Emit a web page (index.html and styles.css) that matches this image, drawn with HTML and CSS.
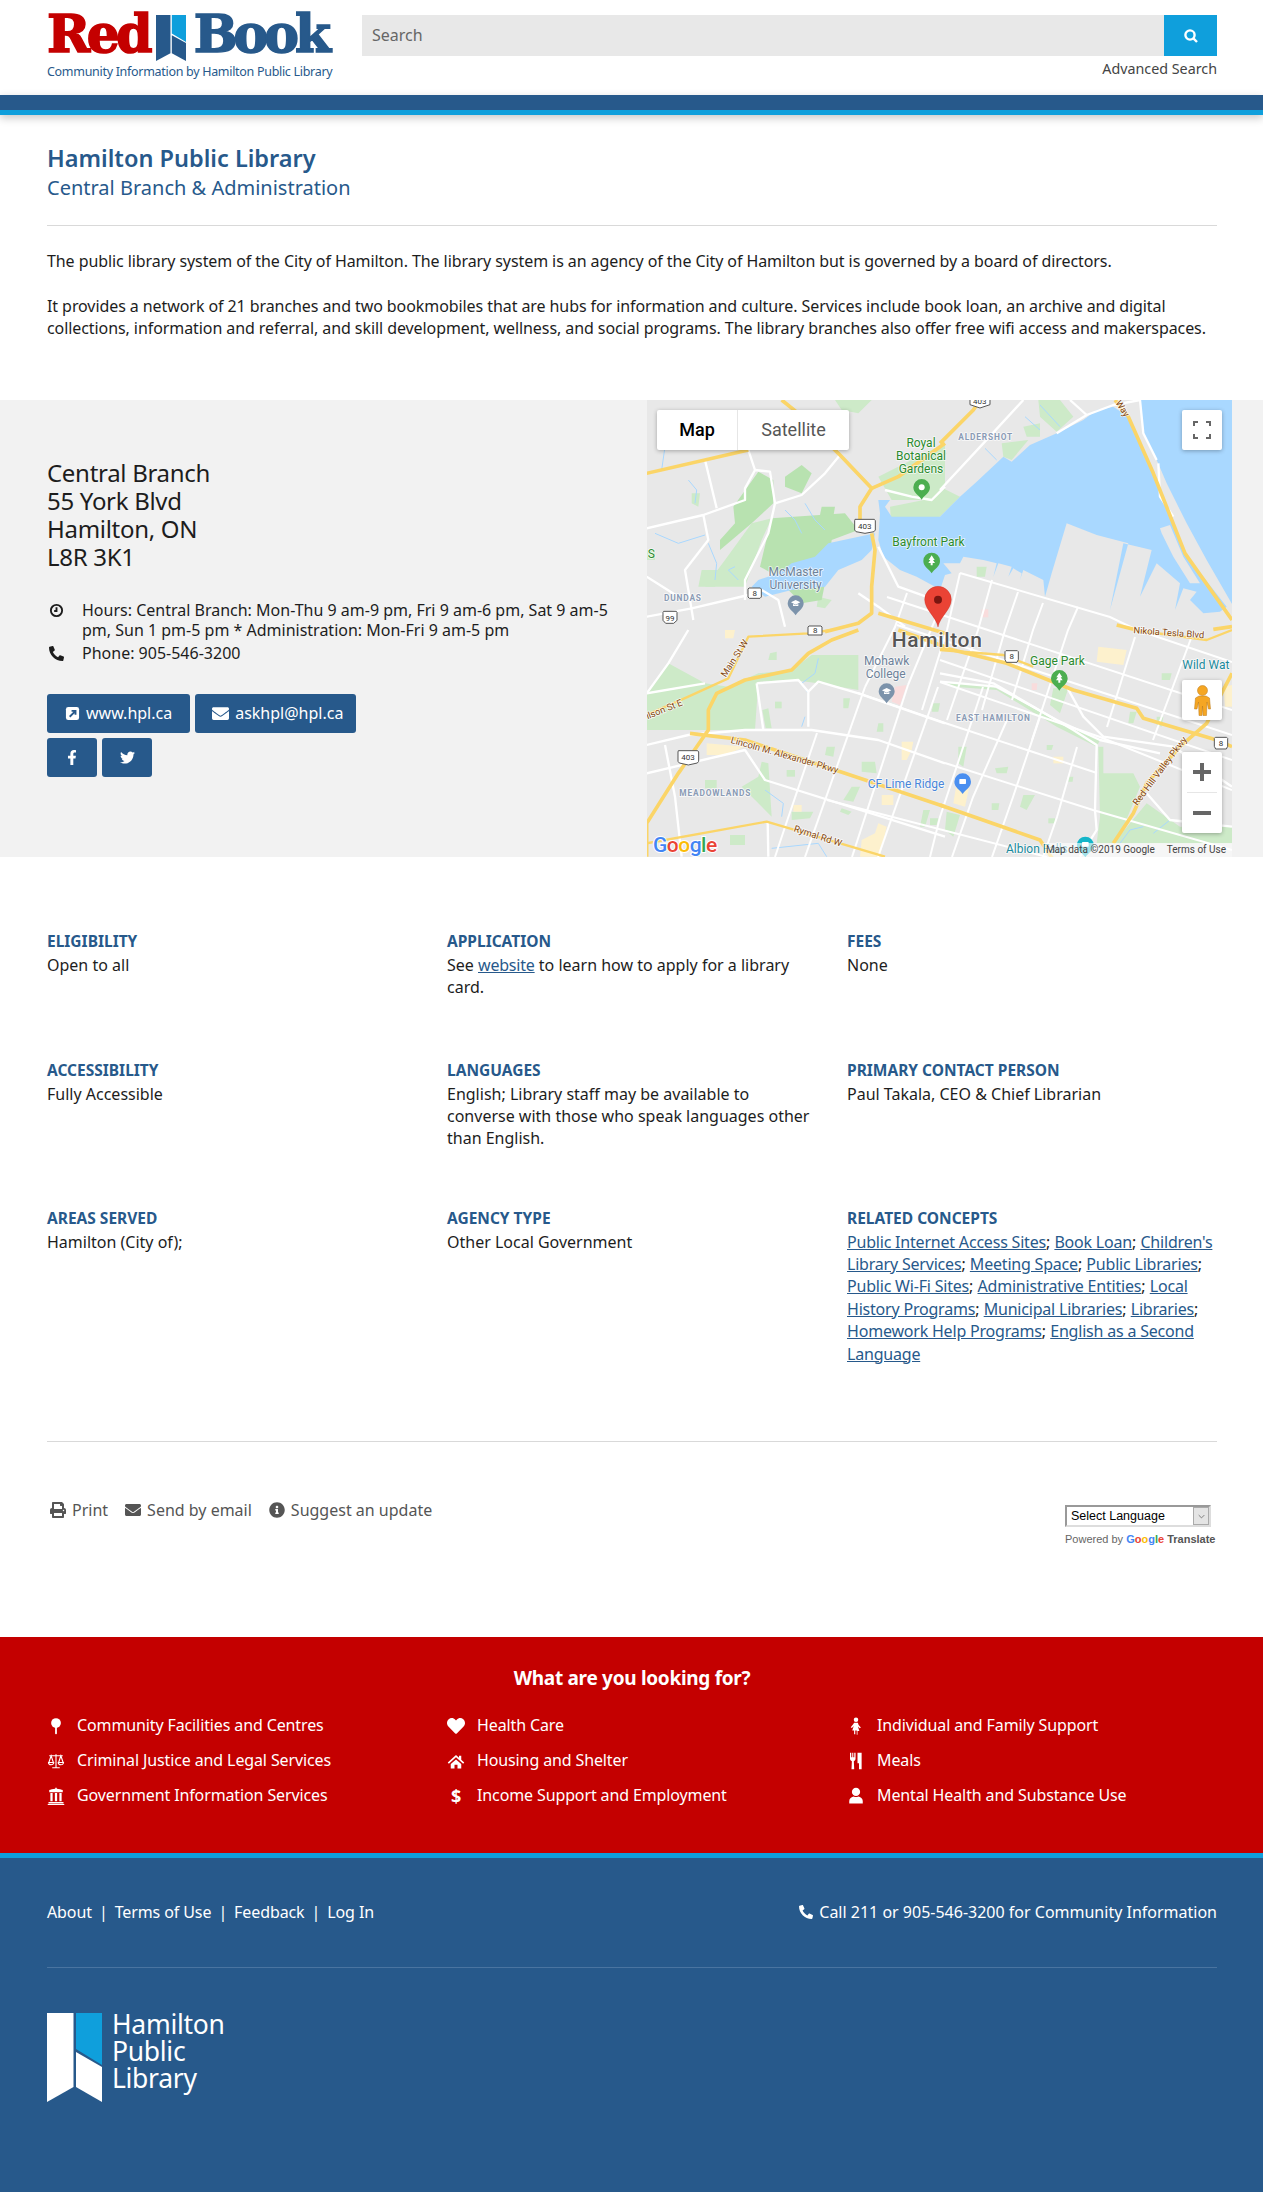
FILE: index.html
```html
<!DOCTYPE html>
<html lang="en">
<head>
<meta charset="utf-8">
<title>Hamilton Public Library - Red Book</title>
<link rel="stylesheet" href="styles.css">
</head>
<body>
<header class="site-header">
  <div class="brand">
    <div class="brand-mark">
      <span class="brand-red">Red</span>
      <svg class="brand-ribbon" viewBox="0 0 55 89" preserveAspectRatio="none"><polygon class="fill-blue" points="0,0 26.5,0 26.5,74 0,89"/><polygon class="fill-cyan" points="29,0 55,0 55,52 29,36"/><polygon class="fill-blue" points="29,39 55,54 55,89 29,74"/></svg>
      <span class="brand-book">Book</span>
    </div>
    <div class="brand-tag">Community Information by Hamilton Public Library</div>
  </div>
  <div class="search-col">
    <div class="search-bar">
      <div class="search-input">Search</div>
      <div class="search-btn"><svg class="ico-search" viewBox="0 0 16 16"><circle cx="7" cy="7" r="4.6"/><line x1="10.4" y1="10.4" x2="14" y2="14"/></svg></div>
    </div>
    <div class="adv-search">Advanced Search</div>
  </div>
</header>
<div class="band"></div>

<section class="intro">
  <h1>Hamilton Public Library</h1>
  <h2>Central Branch &amp; Administration</h2>
  <hr class="rule">
  <p>The public library system of the City of Hamilton. The library system is an agency of the City of Hamilton but is governed by a board of directors.</p>
  <p>It provides a network of 21 branches and two bookmobiles that are hubs for information and culture. Services include book loan, an archive and digital collections, information and referral, and skill development, wellness, and social programs. The library branches also offer free wifi access and makerspaces.</p>
</section>

<section class="location">
  <div class="loc-info">
    <address>Central Branch<br>55 York Blvd<br>Hamilton, ON<br>L8R 3K1</address>
    <div class="loc-line first">
      <svg class="loc-ico" viewBox="0 0 16 16"><circle class="clock" cx="8" cy="8" r="6"/><path class="clock" d="M8 4.500V8.500H5.500"/></svg>
      <span>Hours: Central Branch: Mon-Thu 9 am-9 pm, Fri 9 am-6 pm, Sat 9 am-5 pm, Sun 1 pm-5 pm * Administration: Mon-Fri 9 am-5 pm</span>
    </div>
    <div class="loc-line">
      <svg class="loc-ico" viewBox="0 0 512 512"><path transform="translate(512,0) scale(-1,1)" d="M493.4 24.6l-104-24c-11.3-2.6-22.9 3.3-27.5 13.9l-48 112c-4.2 9.8-1.4 21.3 6.9 28l60.6 49.6c-36 76.7-98.9 140.5-177.2 177.2l-49.6-60.6c-6.8-8.3-18.2-11.1-28-6.9l-112 48C3.9 366.5-2 378.1.6 389.4l24 104C27.1 504.2 36.7 512 48 512c256.1 0 464-207.5 464-464 0-11.2-7.7-20.9-18.6-23.4z"/></svg>
      <span>Phone: 905-546-3200</span>
    </div>
    <div class="btn-row first">
      <a class="btn web"><svg class="btn-ico" viewBox="0 0 16 16"><rect class="w" x="1" y="1" width="14" height="14" rx="2.5"/><path class="arrow" d="M5 11.5L10.500 6M7 5.2H11.2V9.4"/></svg>www.hpl.ca</a>
      <a class="btn mail"><svg class="btn-ico wide" viewBox="0 0 512 512"><path class="w" d="M502.3 190.8c3.9-3.1 9.7-.2 9.7 4.7V400c0 26.5-21.5 48-48 48H48c-26.5 0-48-21.5-48-48V195.6c0-5 5.7-7.8 9.7-4.7 22.4 17.4 52.1 39.5 154.1 113.6 21.1 15.4 56.7 47.8 92.2 47.6 35.7.3 72-32.8 92.3-47.6 102-74.1 131.6-96.3 154-113.7zM256 320c23.2.4 56.6-29.2 73.4-41.4 132.7-96.3 142.8-104.7 173.4-128.7 5.8-4.5 9.2-11.5 9.2-18.9v-19c0-26.5-21.5-48-48-48H48C21.5 64 0 85.5 0 112v19c0 7.4 3.4 14.3 9.2 18.9 30.6 23.9 40.7 32.4 173.4 128.7 16.8 12.2 50.2 41.8 73.4 41.4z"/></svg>askhpl@hpl.ca</a>
    </div>
    <div class="btn-row">
      <a class="btn icon"><svg class="soc-f" viewBox="0 0 320 512"><path class="w" d="M279.14 288l14.22-92.66h-88.91v-60.13c0-25.35 12.42-50.06 52.24-50.06h40.42V6.26S260.43 0 225.36 0c-73.22 0-121.08 44.38-121.08 124.72v70.62H22.89V288h81.39v224h100.17V288z"/></svg></a>
      <a class="btn icon"><svg class="soc-t" viewBox="0 0 512 512"><path class="w" d="M459.37 151.716c.325 4.548.325 9.097.325 13.645 0 138.72-105.583 298.558-298.558 298.558-59.452 0-114.68-17.219-161.137-47.106 8.447.974 16.568 1.299 25.34 1.299 49.055 0 94.213-16.568 130.274-44.832-46.132-.975-84.792-31.188-98.112-72.772 6.498.974 12.995 1.624 19.818 1.624 9.421 0 18.843-1.3 27.614-3.573-48.081-9.747-84.143-51.98-84.143-102.985v-1.299c13.969 7.797 30.214 12.67 47.431 13.319-28.264-18.843-46.781-51.005-46.781-87.391 0-19.492 5.197-37.36 14.294-52.954 51.655 63.675 129.3 105.258 216.365 109.807-1.624-7.797-2.599-15.918-2.599-24.04 0-57.828 46.782-104.934 104.934-104.934 30.213 0 57.502 12.67 76.67 33.137 23.715-4.548 46.456-13.32 66.599-25.34-7.798 24.366-24.366 44.833-46.132 57.827 21.117-2.273 41.584-8.122 60.426-16.243-14.292 20.791-32.161 39.308-52.628 54.253z"/></svg></a>
    </div>
  </div>

  <div class="map">
    <svg class="map-svg" viewBox="0 0 585 457">
      <g class="lt">
        <g transform="translate(-2,0) scale(.33333)">
          <polygon points="700,230 900,130 900,300 740,300"/><polygon points="735,320 885,290 885,350 740,390"/><polygon points="570,0 680,0 640,40 590,30"/><polygon points="320,370 380,355 350,420 300,560 180,560 240,480"/><polygon points="0,450 30,450 30,480 0,480"/><polygon points="170,510 220,510 210,560 160,560"/><polygon points="140,280 165,280 160,320 140,310"/><polygon points="520,590 560,600 540,625 515,620"/>
        </g>
        <g transform="translate(293,0) scale(.33333)">
          <polygon points="295,0 360,0 400,50 350,95 300,50"/><polygon points="250,80 300,70 300,110 260,110"/><polygon points="185,130 265,120 215,180 190,170"/><polygon points="0,260 60,290 0,350"/><polygon points="0,140 20,160 0,190"/><polygon points="110,500 140,500 135,530 110,530"/>
          <polygon points="580,180 610,170 625,210 595,225"/>
        </g>
        <g transform="translate(-2,230) scale(.33333)">
          <polygon points="5,190 70,100 180,160 250,170 340,130 440,120 500,75 640,75 640,180 520,160 440,150 340,155 330,300 190,300 100,300 5,300"/><polygon points="350,395 370,400 380,560 340,520 290,470 340,440"/><polygon points="375,70 395,65 395,90 370,90"/><polygon points="390,215 410,215 410,235 390,235"/><polygon points="352,240 370,235 380,295 362,295"/><polygon points="700,280 715,280 715,305 695,305"/><polygon points="545,350 570,350 565,380 540,375"/><polygon points="425,420 450,420 450,440 425,440"/><polygon points="650,395 690,395 695,430 650,425"/><polygon points="620,470 645,470 625,515 595,510"/><polygon points="440,545 505,545 495,565 440,570"/><polygon points="865,220 885,220 880,245 860,245"/><polygon points="595,205 615,205 610,235 595,235"/><polygon points="255,615 300,615 300,645 255,645"/><polygon points="590,535 620,545 610,555 585,545"/><polygon points="835,540 855,540 840,590 825,590"/><polygon points="855,565 880,565 875,585 855,585"/><polygon points="180,450 215,450 215,475 180,475"/>
        </g>
        <g transform="translate(293,230) scale(.33333)">
          <polygon points="15,155 150,165 350,270 480,330 470,350 350,290 170,180 40,170"/><polygon points="340,175 385,175 360,250 330,225"/><polygon points="475,350 490,350 490,430 580,430 600,470 530,640 470,640 480,560"/><polygon points="165,415 205,410 200,430 170,430"/><polygon points="320,345 340,345 335,360 320,360"/><polygon points="385,440 400,440 398,455 385,455"/><polygon points="250,495 285,495 260,540 240,530"/><polygon points="155,520 178,520 175,540 155,540"/><polygon points="325,565 345,565 345,580 325,580"/><polygon points="55,350 80,350 70,410 55,400"/><polygon points="20,545 60,555 40,620 15,600"/><polygon points="570,245 590,245 580,280 565,280"/><polygon points="665,130 695,130 690,150 665,150"/><polygon points="650,260 670,260 665,290 650,285"/><polygon points="620,520 720,590 876,590 876,640 520,640"/>
        </g>
      </g>
      <g class="dk" transform="translate(-2,0) scale(.33333)">
        <polygon points="265,320 340,215 385,240 385,310 320,370 225,450 225,420 270,370"/><polygon points="380,355 600,340 640,390 560,420 550,500 530,600 470,610 380,520 345,500"/><polygon points="420,230 470,195 500,220 470,280 420,260"/><polygon points="530,320 570,320 565,350 525,345"/>
      </g>
      <g class="stream">
        <g transform="translate(-2,0) scale(.33333)">
          <polyline points="130,240 155,270 150,310"/><polyline points="420,330 450,360 470,400"/><polyline points="480,310 510,360 540,390"/><polyline points="120,90 60,140 50,210"/><polyline points="270,500 250,510 280,540"/><polyline points="190,430 215,490 210,540"/><polyline points="30,400 100,430 180,405"/>
        </g>
        <g transform="translate(293,0) scale(.33333)">
          <polyline points="255,50 300,90"/><polyline points="135,145 170,180"/><polyline points="300,15 360,80"/>
        </g>
        <g transform="translate(-2,230) scale(.33333)">
          <polyline points="520,85 510,130 470,160 490,190"/><polyline points="480,260 470,290"/><polyline points="360,480 415,520 410,560"/><polyline points="380,655 520,640 545,680"/>
        </g>
        <g transform="translate(293,230) scale(.33333)">
          <polyline points="610,590 570,600 540,640"/><polyline points="690,570 640,610"/>
        </g>
      </g>
      <g class="tan">
        <polygon transform="translate(-2,230) scale(.33333)" points="770,335 805,335 800,360 785,390 770,390"/><polygon transform="translate(-2,230) scale(.33333)" points="710,495 745,495 745,525 710,525"/><polygon transform="translate(-2,230) scale(.33333)" points="650,630 690,610 700,580 725,590 705,680 645,680"/><polygon transform="translate(-2,230) scale(.33333)" points="185,340 300,350 240,375 185,375"/><polygon transform="translate(-2,230) scale(.33333)" points="445,525 470,525 470,545 445,545"/><polygon transform="translate(-2,230) scale(.33333)" points="240,0 270,0 265,25 240,25"/>
        <polygon transform="translate(293,230) scale(.33333)" points="475,50 560,60 550,105 470,95"/><polygon transform="translate(293,230) scale(.33333)" points="340,380 370,380 370,400 340,400"/><polygon transform="translate(293,230) scale(.33333)" points="50,460 90,460 75,530 40,520"/><polygon transform="translate(293,230) scale(.33333)" points="850,170 876,165 876,230 855,230"/>
      </g>
      <g class="pink">
        <polygon transform="translate(-2,230) scale(.33333)" points="750,170 785,165 765,225 740,215"/><polygon transform="translate(293,230) scale(.33333)" points="275,160 292,160 290,180 275,180"/><polygon transform="translate(293,0) scale(.33333)" points="125,628 145,628 145,652 125,652"/>
      </g>
      <g class="water" transform="translate(293,0) scale(.33333)">
        <polygon points="600,0 876,0 876,612 800,480 740,370 680,250 650,180 610,100"/>
        <polygon points="520,20 470,30 430,60 350,100 270,135 215,185 190,170 110,245 60,290 0,350 -145,350 -165,320 -150,300 -185,300 -180,340 -185,420 -170,470 -120,510 -70,530 -15,560 0,570 15,525 35,520 10,490 60,490 70,470 130,480 170,490 160,530 175,490 215,500 205,530 220,505 245,520 240,540 250,510 310,540 315,590 335,520 380,370 470,405 565,430 510,630 550,430 635,450 600,590 650,490 720,550 705,630 730,565 770,575 750,600 790,640 840,635 860,620 735,460 640,220 565,50"/>
        <polygon points="-195,400 -335,430 -375,470 -445,490 -485,520 -545,540 -565,560 -525,590 -445,570 -345,560 -305,510 -235,480 -205,450"/>
      </g>
      <g class="land" transform="translate(293,0) scale(.33333)">
        <polygon points="660,385 690,375 730,470 780,550 750,550 700,470 665,400"/>
      </g>
      <g class="rd" transform="translate(-2,0) scale(.33333)">
        <polyline points="5,385 175,345 300,300 300,265 330,210 375,215 390,310 470,285 540,220 585,165 560,120"/><polyline points="390,310 370,400 300,540 300,600"/><polyline points="175,345 190,420 120,510 135,600 145,660"/><polyline points="180,180 215,325"/><polyline points="310,150 330,210"/><polyline points="5,530 60,565 100,590"/><polyline points="5,650 140,625 310,585 350,570 400,600 420,680"/><polyline points="700,440 760,560 900,610"/><polyline points="720,270 800,290 860,300 900,260"/><polyline points="640,580 700,620 780,680"/>
      </g>
      <g class="rd" transform="translate(293,0) scale(.33333)">
        <polyline points="0,270 130,130 250,0"/><polyline points="390,0 440,45 520,15 600,0"/><polyline points="350,100 440,45"/><polyline points="600,0 610,100 650,180"/><polyline points="655,190 660,290 700,350"/>
      </g>
      <g class="rd" transform="translate(-2,230) scale(.33333)">
        <polyline points="5,345 130,315 300,300 500,300 700,330 900,400"/><polyline points="5,430 300,360 360,450 900,620"/><polyline points="335,160 355,300"/><polyline points="335,160 460,150 490,185 490,290"/><polyline points="490,185 520,155 640,190 900,280"/><polyline points="60,345 90,500 110,680"/><polyline points="5,190 70,100 130,0"/>
        <polyline points="5,190 180,160"/><polyline points="368,575 370,680"/>
      </g>
      <g class="rd" transform="translate(293,230) scale(.33333)">
        <polyline points="0,155 170,170 350,270 480,330 660,370"/><polyline points="0,130 160,160 400,300 470,345 465,540 470,600 420,680"/><polyline points="380,170 430,260 490,320 700,350"/><polyline points="620,490 690,570 876,590"/><polyline points="700,350 876,470"/>
      </g>
      <g class="rd2">
        <polyline points="218,287 158,457"/><polyline points="261,285 205,457"/><polyline points="291,287 231,457"/><polyline points="336,287 293,417 283,457"/><polyline points="360,320 326,397 305,457"/><polyline points="393,317 366,397 345,457"/><polyline points="430,347 410,417 396,457"/><polyline points="313,173 300,230 275,310"/><polyline points="345,180 331,230 300,320"/><polyline points="371,192 358,230 335,310"/><polyline points="396,203 386,230 365,300"/><polyline points="431,207 421,230 385,340"/><polyline points="488,237 460,327"/><polyline points="546,233 506,340"/><polyline points="260,193 248,227 218,287"/><polyline points="298,197 285,227 261,285"/><polyline points="170,333 138,427 128,457"/>
        <polyline points="313,173 463,217 490,230 585,262"/><polyline points="240,197 585,310"/><polyline points="250,225 585,335"/><polyline points="211,293 298,323 450,373"/><polyline points="298,363 446,410 585,450"/><polyline points="293,282 453,337 585,390"/><polyline points="293,260 585,360"/><polyline points="180,400 400,457"/>
      </g>
      <g class="hw">
        <g transform="translate(-2,0) scale(.33333)">
          <polyline points="5,220 310,150"/><polyline points="410,0 460,40 580,160 680,265 645,320 645,370"/><polyline points="680,265 760,230 900,130"/><polyline points="680,400 690,450 680,560 680,640 640,670 540,695"/><polyline points="700,640 900,700"/>
        </g>
        <g transform="translate(293,0) scale(.33333)">
          <polyline points="0,130 100,30 120,0"/><polyline points="525,0 565,50 640,220 735,460 876,660"/><polyline points="530,675 590,690"/><polyline points="820,688 876,680"/>
        </g>
        <g transform="translate(-2,230) scale(.33333)">
          <polyline points="640,0 560,30 490,70 440,120 300,150 215,190 190,240 190,300 100,430 5,580 5,680"/><polyline class="thin" points="5,255 130,200 250,145 310,20 490,10 560,0"/><polyline points="135,310 300,330 600,430 900,530"/><polyline class="thin" points="5,640 365,575 720,680"/>
          <polyline points="760,0 900,50"/>
        </g>
        <g transform="translate(293,230) scale(.33333)">
          <polyline points="0,50 200,100 400,180 590,235 610,265 830,330 876,350"/><polyline class="thin" points="0,60 190,75 280,110"/><polyline points="0,525 300,630 340,690"/><polyline points="520,640 580,550 620,460 720,350 800,280 850,180 876,130"/><polyline class="thin" points="580,0 800,30 876,0"/>
        </g>
      </g>
      <g class="pins">
        <g transform="translate(-2,0) scale(.33333)">
          <path class="pin-green" d="M830 237a25 25 0 0 1 25 25c0 17-17 24-25 37c-8-13-25-20-25-37a25 25 0 0 1 25-25z"/><circle class="pin-in" cx="830" cy="262" r="9"/>
          <path class="pin-green" d="M860 458a25 25 0 0 1 25 25c0 17-17 24-25 37c-8-13-25-20-25-37a25 25 0 0 1 25-25z"/><path class="pin-in" d="M860 466l9 14h-5l6 9h-7v7h-6v-7h-7l6-9h-5z"/>
          <path class="pin-gray" d="M452 586a24 24 0 0 1 24 24c0 16-16 23-24 36c-8-13-24-20-24-36a24 24 0 0 1 24-24z"/><path class="pin-in" d="M452 600l14 7-14 7-14-7zM444 612l8 4 8-4v6h-16z"/>
        </g>
        <g transform="translate(-2,230) scale(.33333)">
          <path class="pin-gray" d="M725 160a24 24 0 0 1 24 24c0 16-16 23-24 36c-8-13-24-20-24-36a24 24 0 0 1 24-24z"/><path class="pin-in" d="M725 174l14 7-14 7-14-7zM717 186l8 4 8-4v6h-16z"/>
        </g>
        <g transform="translate(293,230) scale(.33333)">
          <path class="pin-green" d="M358 120a25 25 0 0 1 25 25c0 17-17 24-25 37c-8-13-25-20-25-37a25 25 0 0 1 25-25z"/><path class="pin-in" d="M358 128l9 14h-5l6 9h-7v7h-6v-7h-7l6-9h-5z"/>
          <path class="pin-blue" d="M68 430a25 25 0 0 1 25 25c0 17-17 24-25 37c-8-13-25-20-25-37a25 25 0 0 1 25-25z"/><rect class="pin-in" x="58" y="447" width="20" height="15" rx="2"/>
          <path class="pin-teal" d="M436 620a25 25 0 0 1 25 25c0 17-17 24-25 37c-8-13-25-20-25-37a25 25 0 0 1 25-25z"/><rect class="pin-in" x="426" y="636" width="20" height="14" rx="2"/>
        </g>
      </g>
      <g class="shield">
        <g transform="translate(-2,0) scale(.33333)">
          <path d="M630 358h58l3 4v28l-4 5-27 5-27-5-4-5v-28z"/><text x="659" y="386">403</text>
          <path d="M312 564h34l3 3v24l-4 4h-32l-4-4v-24z"/><text x="329" y="588">8</text>
          <path d="M56 634h38l2 3v24l-10 9h-24l-8-9v-24z"/><text x="75" y="662">99</text>
          <path d="M492 678h36l3 3v24h-42v-24z"/><text x="511" y="699">8</text>
        </g>
        <g transform="translate(293,0) scale(.33333)">
          <path d="M88 -20h60l2 4v30l-30 10-30-10v-30z"/><text x="119" y="12">403</text>
        </g>
        <g transform="translate(-2,230) scale(.33333)">
          <path d="M100 362h58l3 4v28l-4 5-27 6-27-6-4-5v-28z"/><text x="129" y="391">403</text>
        </g>
        <g transform="translate(293,230) scale(.33333)">
          <path d="M198 62h34l3 3v24l-4 8h-32l-4-8v-24z"/><text x="215" y="87">8</text>
          <path d="M826 322h34l3 3v24l-4 8h-32l-4-8v-24z"/><text x="843" y="349">8</text>
        </g>
      </g>
      <g class="lab">
        <g transform="translate(-2,0) scale(.33333)">
          <text class="gr" x="828" y="142" text-anchor="middle">Royal</text>
          <text class="gr" x="828" y="181" text-anchor="middle">Botanical</text>
          <text class="gr" x="828" y="220" text-anchor="middle">Gardens</text>
          <text class="gr" x="742" y="439">Bayfront Park</text>
          <text class="gr" x="8" y="473">S</text>
          <text class="sl" x="452" y="529" text-anchor="middle">McMaster</text>
          <text class="sl" x="452" y="568" text-anchor="middle">University</text>
          <text class="dist" x="57" y="602">DUNDAS</text>
        </g>
        <g transform="translate(293,0) scale(.33333)">
          <text class="dist" x="55" y="119">ALDERSHOT</text>
          <text class="rdl" transform="translate(526,8) rotate(58)">Way</text>
        </g>
        <g transform="translate(-2,230) scale(.33333)">
          <text class="city" x="740" y="52">Hamilton</text>
          <text class="sl" x="725" y="106" text-anchor="middle">Mohawk</text>
          <text class="sl" x="722" y="145" text-anchor="middle">College</text>
          <text class="dist" x="103" y="497">MEADOWLANDS</text>
          <text class="bl" x="668" y="475">CF Lime Ridge</text>
          <text class="rdl" transform="translate(256,338) rotate(16)">Lincoln M. Alexander Pkwy</text>
          <text class="rdl" transform="translate(242,143) rotate(-57)">Main St W</text>
          <text class="rdl" transform="translate(8,268) rotate(-22)">ilson St E</text>
          <text class="rdl" transform="translate(445,604) rotate(18)">Rymal Rd W</text>
        </g>
        <g transform="translate(293,230) scale(.33333)">
          <text class="gr" x="270" y="104">Gage Park</text>
          <text class="dist" x="48" y="272">EAST HAMILTON</text>
          <text class="tl" x="727" y="118">Wild Wat</text>
          <text class="tl" x="198" y="668">Albion Falls</text>
          <text class="rdl" transform="translate(580,10) rotate(4)">Nikola Tesla Blvd</text>
          <text class="rdl" transform="translate(592,528) rotate(-53)">Red Hill Valley Pkwy</text>
        </g>
      </g>
      <g transform="translate(291,227) scale(.33333)">
        <path class="marker" d="M0 0c-6-32-40-52-40-82a40 40 0 0 1 80 0c0 30-34 50-40 82z"/>
        <circle class="marker-dot" cx="0" cy="-82" r="12"/>
      </g>
      <text class="google" x="6" y="452"><tspan class="g-b">G</tspan><tspan class="g-r">o</tspan><tspan class="g-y">o</tspan><tspan class="g-b">g</tspan><tspan class="g-g">l</tspan><tspan class="g-r">e</tspan></text>
    </svg>
    <div class="map-type"><span class="on">Map</span><span>Satellite</span></div>
    <div class="map-btn full"><svg viewBox="0 0 18 18" class="full-ico"><path d="M1 5V1H5M13 1H17V5M17 13V17H13M5 17H1V13"/></svg></div>
    <div class="map-btn peg"><svg viewBox="0 0 17 31" class="peg-ico"><circle cx="8.500" cy="5.500" r="5"/><path d="M5 11h7l3.500 2 1 11h-2l-1.500-7-.5 13.500H9L8.500 21 8 30.500H5L4.500 17 3 24H.5l1-11z"/></svg></div>
    <div class="map-btn zoom"><svg viewBox="0 0 18 18" class="zoom-ico"><path d="M7 0h4v7h7v4h-7v7H7v-7H0V7h7z"/></svg><i class="zoom-sep"></i><svg viewBox="0 0 18 18" class="zoom-ico"><rect x="0" y="7" width="18" height="4"/></svg></div>
    <div class="map-attr"><span>Map data ©2019 Google</span><span>Terms of Use</span></div>
  </div>
</section>

<section class="details">
  <div class="info"><h3>ELIGIBILITY</h3><p>Open to all</p></div>
  <div class="info"><h3>APPLICATION</h3><p>See <a>website</a> to learn how to apply for a library card.</p></div>
  <div class="info"><h3>FEES</h3><p>None</p></div>
  <div class="info"><h3>ACCESSIBILITY</h3><p>Fully Accessible</p></div>
  <div class="info"><h3>LANGUAGES</h3><p>English; Library staff may be available to converse with those who speak languages other than English.</p></div>
  <div class="info"><h3>PRIMARY CONTACT PERSON</h3><p>Paul Takala, CEO &amp; Chief Librarian</p></div>
  <div class="info"><h3>AREAS SERVED</h3><p>Hamilton (City of);</p></div>
  <div class="info"><h3>AGENCY TYPE</h3><p>Other Local Government</p></div>
  <div class="info"><h3>RELATED CONCEPTS</h3><p><a>Public Internet Access Sites</a>; <a>Book Loan</a>; <a>Children's Library Services</a>; <a>Meeting Space</a>; <a>Public Libraries</a>; <a>Public Wi-Fi Sites</a>; <a>Administrative Entities</a>; <a>Local History Programs</a>; <a>Municipal Libraries</a>; <a>Libraries</a>; <a>Homework Help Programs</a>; <a>English as a Second Language</a></p></div>
</section>

<section class="tools">
  <hr class="rule">
  <div class="tools-row">
    <div class="tool-links">
      <span class="tool"><svg viewBox="0 0 512 512"><path d="M448 192V77.25c0-8.49-3.37-16.62-9.37-22.63L393.37 9.37c-6-6-14.14-9.37-22.63-9.37H96C78.33 0 64 14.33 64 32v160c-35.35 0-64 28.65-64 64v112c0 8.84 7.16 16 16 16h48v96c0 17.67 14.33 32 32 32h320c17.67 0 32-14.33 32-32v-96h48c8.84 0 16-7.16 16-16V256c0-35.35-28.65-64-64-64zm-64 256H128v-96h256v96zm0-224H128V64h192v48c0 8.84 7.16 16 16 16h48v96zm48 72c-13.25 0-24-10.75-24-24 0-13.26 10.75-24 24-24s24 10.74 24 24c0 13.25-10.75 24-24 24z"/></svg>Print</span>
      <span class="tool"><svg viewBox="0 0 512 512"><path d="M502.3 190.8c3.9-3.1 9.7-.2 9.7 4.7V400c0 26.5-21.5 48-48 48H48c-26.5 0-48-21.5-48-48V195.6c0-5 5.7-7.8 9.7-4.7 22.4 17.4 52.1 39.5 154.1 113.6 21.1 15.4 56.7 47.8 92.2 47.6 35.7.3 72-32.8 92.3-47.6 102-74.1 131.6-96.3 154-113.7zM256 320c23.2.4 56.6-29.2 73.4-41.4 132.7-96.3 142.8-104.7 173.4-128.7 5.8-4.5 9.2-11.5 9.2-18.9v-19c0-26.5-21.5-48-48-48H48C21.5 64 0 85.5 0 112v19c0 7.4 3.4 14.3 9.2 18.9 30.6 23.9 40.7 32.4 173.4 128.7 16.8 12.2 50.2 41.8 73.4 41.4z"/></svg>Send by email</span>
      <span class="tool"><svg viewBox="0 0 512 512"><path d="M256 8C119.043 8 8 119.083 8 256c0 136.997 111.043 248 248 248s248-111.003 248-248C504 119.083 392.957 8 256 8zm0 110c23.196 0 42 18.804 42 42s-18.804 42-42 42-42-18.804-42-42 18.804-42 42-42zm56 254c0 6.627-5.373 12-12 12h-88c-6.627 0-12-5.373-12-12v-24c0-6.627 5.373-12 12-12h12v-64h-12c-6.627 0-12-5.373-12-12v-24c0-6.627 5.373-12 12-12h64c6.627 0 12 5.373 12 12v100h12c6.627 0 12 5.373 12 12v24z"/></svg>Suggest an update</span>
    </div>
    <div class="translate">
      <div class="lang-select"><span>Select Language</span><i class="lang-arrow"><svg viewBox="0 0 10 6"><path d="M1 1l4 4 4-4"/></svg></i></div>
      <div class="powered">Powered by <b class="gl"><span class="g-b">G</span><span class="g-r">o</span><span class="g-y">o</span><span class="g-b">g</span><span class="g-g">l</span><span class="g-r">e</span></b> <b class="tr">Translate</b></div>
    </div>
  </div>
</section>

<section class="looking">
  <h4>What are you looking for?</h4>
  <ul class="cat-grid">
    <li><svg viewBox="0 0 16 24"><circle cx="8" cy="8" r="6.500"/><rect x="6.800" y="12" width="2.400" height="11" rx="1"/></svg>Community Facilities and Centres</li>
    <li><svg viewBox="0 0 512 512"><path d="M462.3 62.6C407.5 15.9 326 24.3 275.7 76.2L256 96.5l-19.7-20.3C186.1 24.3 104.500 15.9 49.700 62.6c-62.800 53.600-66.100 149.800-9.900 207.900l193.500 199.800c12.500 12.900 32.800 12.900 45.300 0l193.500-199.800c56.300-58.100 53-154.300-9.800-207.900z"/></svg>Health Care</li>
    <li><svg viewBox="0 0 16 24"><circle cx="8" cy="3.500" r="3"/><path d="M5.500 7.500h5l1 3 3 3.500-1.500 1-2.500-2.500 2 6h-2.500v5H9V18H7v5H5.500v-5H3l2-6-2.500 2.500-1.500-1 3-3.500z"/></svg>Individual and Family Support</li>
    <li><svg class="stroke" viewBox="0 0 24 24"><path d="M12 3v18M3 5h18M7 21h10M5.500 5L2.500 14h6zM18.500 5l-3 9h6zM2 14a3.500 3 0 0 0 7 0zM15 14a3.500 3 0 0 0 7 0z"/></svg>Criminal Justice and Legal Services</li>
    <li><svg viewBox="0 0 24 24"><path d="M12 4L1 14l1.500 1.500L12 7l9.500 8.500L23 14l-4-3.600V5h-3v2.700zM5 16l7-6 7 6v6h-5v-5h-4v5H5z"/></svg>Housing and Shelter</li>
    <li><svg viewBox="0 0 20 24"><path d="M2 1h1.700v6H5V1h1.400v6h1.300V1H9.400v8c0 1.700-1 2.800-2.300 3.200L7.600 23H4l.5-10.800C3 11.800 2 10.700 2 9zM12 1h5.500v22h-3.500v-8h-2z"/></svg>Meals</li>
    <li><svg viewBox="0 0 24 24"><path d="M11 1h2v1.400c3 .3 6.500 1.200 8 1.700v2.900H3V4.100c1.500-.5 5-1.400 8-1.700zM4.500 8h3v11h-3zM10.500 8h3v11h-3zM16.500 8h3v11h-3zM2 20h20v2H2zM1 22.500h22V24H1z"/></svg>Government Information Services</li>
    <li><span class="dollar">$</span>Income Support and Employment</li>
    <li><svg viewBox="0 0 20 24"><circle cx="10" cy="6.500" r="5.500"/><path d="M1 22v-3.500C1 15 4 13 7 12.500c1.800 1 4.200 1 6 0 3 .5 6 2.500 6 6V22z"/></svg>Mental Health and Substance Use</li>
  </ul>
</section>

<footer class="site-footer">
  <div class="foot-top">
    <div class="foot-links"><a>About</a><i>|</i><a>Terms of Use</a><i>|</i><a>Feedback</a><i>|</i><a>Log In</a></div>
    <div class="foot-call"><svg viewBox="0 0 512 512"><path transform="translate(512,0) scale(-1,1)" d="M493.4 24.6l-104-24c-11.3-2.6-22.9 3.3-27.5 13.9l-48 112c-4.2 9.8-1.4 21.3 6.9 28l60.6 49.6c-36 76.7-98.9 140.5-177.2 177.2l-49.6-60.6c-6.8-8.3-18.2-11.1-28-6.9l-112 48C3.9 366.5-2 378.1.6 389.4l24 104C27.1 504.2 36.7 512 48 512c256.1 0 464-207.5 464-464 0-11.2-7.7-20.9-18.6-23.4z"/></svg>Call 211 or 905-546-3200 for Community Information</div>
  </div>
  <hr class="rule foot-rule">
  <div class="foot-logo">
    <svg viewBox="0 0 55 89"><polygon class="fill-white" points="0,0 26.5,0 26.5,74 0,89"/><polygon class="fill-cyan" points="29,0 55,0 55,52 29,36"/><polygon class="fill-white" points="29,39 55,54 55,89 29,74"/></svg>
    <div class="foot-name">Hamilton<br>Public<br>Library</div>
  </div>
</footer>
</body>
</html>
```
FILE: styles.css
```css
* { box-sizing: border-box; }
html, body { margin: 0; padding: 0; }
body { font-family: "Noto Sans", "Open Sans", sans-serif; font-size: 16px; line-height: 22.4px; color: #1d1d1d; background: #fff; width: 1263px; height: 2192px; overflow: hidden; }
h1, h2, h3, h4, p { margin: 0; font-weight: 400; }
.fill-blue { fill: #27598b; }
.fill-cyan { fill: #0f9fdc; }
.fill-white { fill: #fff; }

.site-header { height: 95px; padding: 15px 46px 0 47px; display: flex; gap: 30px; }
.brand { width: 285px; flex: none; }
.brand-mark { display: flex; height: 46px; align-items: flex-start; justify-content: space-between; padding-right: 5px; }
.brand-red, .brand-book { font-family: "DejaVu Serif", serif; font-weight: 700; font-size: 52px; line-height: 38px; -webkit-text-stroke: 1.6px currentColor; height: 38px; }
.brand-red { color: #c40000; letter-spacing: -3.5px; }
.brand-book { color: #27598b; letter-spacing: -4px; }
.brand-ribbon { width: 30px; height: 46px; flex: none; }
.brand-tag { color: #27598b; font-size: 12.5px; line-height: 18px; white-space: nowrap; letter-spacing: -.3px; margin-top: 2px; }
.search-col { flex: 1; }
.search-bar { display: flex; height: 41px; background: #e8e8e8; }
.search-input { flex: 1; padding: 0 10px; line-height: 41px; font-size: 16px; color: #666; }
.search-btn { width: 53px; background: #0f9fdc; display: flex; align-items: center; justify-content: center; }
.ico-search { width: 16px; height: 16px; fill: none; stroke: #fff; stroke-width: 2.4; }
.adv-search { text-align: right; font-size: 14.3px; color: #444; line-height: 22px; margin-top: 2px; }
.band { height: 20px; background: #27598b; border-bottom: 5px solid #0f9fdc; box-shadow: 0 3px 8px rgba(0,0,0,.22); }

.intro { height: 285px; padding: 28px 46px 0 47px; }
.intro h1 { font-size: 23.5px; line-height: 30px; color: #27598b; font-weight: 600; }
.intro h2 { font-size: 20px; line-height: 30px; color: #27598b; }
.rule { border: 0; height: 1px; background: #d9d9d9; margin: 0; }
.intro .rule { margin: 22px 0 24px; }
.intro p { margin-bottom: 22.4px; letter-spacing: -.08px; }

.location { display: flex; height: 457px; background: #f2f2f2; padding-right: 31px; }
.loc-info { width: 647px; flex: none; padding: 59px 27px 0 47px; }
address { font-style: normal; font-size: 24px; line-height: 28px; letter-spacing: -.3px; margin-bottom: 30px; }
.loc-line { display: flex; line-height: 19.5px; margin-bottom: 4px; }
.loc-ico { width: 15px; height: 15px; margin: 2px 18px 0 2px; flex: none; fill: #1d1d1d; }
.clock { fill: none; stroke: #1d1d1d; stroke-width: 2; }
.btn-row { display: flex; gap: 5px; margin-top: 5px; }
.btn-row.first { margin-top: 30px; }
.btn { display: flex; align-items: center; height: 39px; border-radius: 3px; background: #27598b; color: #fff; font-size: 16px; }
.btn.web { padding: 0 18px 0 18px; }
.btn.mail { padding: 0 13px 0 17px; }
.btn.icon { justify-content: center; width: 50px; }
.btn-ico { width: 15px; height: 15px; margin-right: 6px; }
.btn-ico.wide { width: 17px; height: 17px; }
.w { fill: #fff; }
.arrow { fill: none; stroke: #27598b; stroke-width: 2; }
.soc-f { height: 15px; width: 10px; }
.soc-t { height: 15px; width: 15px; }

.map { position: relative; width: 585px; height: 457px; flex: none; background: #e8e8e8; overflow: hidden; font-family: Roboto, sans-serif; }
.map-svg { display: block; width: 585px; height: 457px; }
.lt polygon { fill: #cdeac8; }
.dk polygon { fill: #b8e2b0; }
.tan polygon { fill: #fdf1cd; }
.pink polygon { fill: #f9dcdc; }
.water polygon { fill: #a9d8ff; }
.land polygon { fill: #e8e8e8; }
.stream polyline { fill: none; stroke: #a9d8ff; stroke-width: 3; }
.rd polyline { fill: none; stroke: #fff; stroke-width: 7; stroke-linejoin: round; }
.rd2 polyline { fill: none; stroke: #fff; stroke-width: 2; }
.hw polyline { fill: none; stroke: #fbd568; stroke-width: 11; stroke-linejoin: round; }
.hw polyline.thin { stroke-width: 7; }
.shield path { fill: #fff; stroke: #555; stroke-width: 3; }
.shield text { font-size: 24px; text-anchor: middle; fill: #333; font-family: Roboto, sans-serif; }
.pin-green { fill: #4cae50; }
.pin-gray { fill: #7c93ab; }
.pin-blue { fill: #4a8ff0; }
.pin-teal { fill: #14b5c9; }
.pin-in { fill: #fff; }
.lab text { font-family: Roboto, sans-serif; font-size: 36px; paint-order: stroke; stroke: rgba(255,255,255,.75); stroke-width: 5px; stroke-linejoin: round; }
.lab .gr { fill: #2b8a2e; }
.lab .sl { fill: #6e8299; }
.lab .bl { fill: #4a86d9; }
.lab .tl { fill: #1b8a9c; }
.lab .dist { fill: #8a9bb5; font-size: 25px; font-weight: 700; letter-spacing: 2.5px; }
.lab .city { fill: #555; font-size: 63px; font-weight: 500; letter-spacing: 2px; }
.lab .rdl { fill: #84470f; font-size: 28px; }
.marker { fill: #ea4335; stroke: #c5281c; stroke-width: 1; }
.marker-dot { fill: #7a1610; }
.google { font-family: Roboto, sans-serif; font-size: 21px; font-weight: 500; paint-order: stroke; stroke: #fff; stroke-width: 2px; letter-spacing: -.5px; }
.g-b { fill: #4285f4; color: #4285f4; }
.g-r { fill: #ea4335; color: #ea4335; }
.g-y { fill: #fbbc05; color: #fbbc05; }
.g-g { fill: #34a853; color: #34a853; }
.map-type { position: absolute; left: 10px; top: 10px; height: 40px; width: 192px; display: flex; background: #fff; border-radius: 2px; box-shadow: 0 1px 4px rgba(0,0,0,.3); font-size: 18px; line-height: 40px; color: #565656; }
.map-type span { flex: 1; text-align: center; }
.map-type .on { flex: none; width: 81px; color: #000; font-weight: 500; border-right: 1px solid #e6e6e6; }
.map-btn { position: absolute; left: 535px; width: 40px; background: #fff; border-radius: 2px; box-shadow: 0 1px 4px rgba(0,0,0,.3); display: flex; flex-direction: column; align-items: center; justify-content: center; }
.full { top: 10px; height: 40px; }
.full-ico { width: 18px; height: 18px; fill: none; stroke: #666; stroke-width: 2; }
.peg { top: 280px; height: 40px; }
.peg-ico { height: 31px; width: 17px; fill: #f5a623; stroke: #b8791a; stroke-width: .5; }
.zoom { top: 352px; height: 81px; }
.zoom-ico { width: 18px; height: 18px; fill: #666; }
.zoom-sep { display: block; width: 30px; height: 1px; background: #e6e6e6; margin: 11px 0; }
.map-attr { position: absolute; right: 0; bottom: 0; left: 398px; height: 14px; display: flex; gap: 12px; justify-content: flex-end; padding-right: 6px; background: rgba(255,255,255,.6); font-size: 10px; line-height: 14px; color: #444; }

.details { display: grid; grid-template-columns: repeat(3, 370px); grid-template-rows: 70px 89px auto; column-gap: 30px; row-gap: 59px; padding: 73px 46px 0 47px; height: 584px; align-content: start; }
.details h3 { font-size: 15.5px; line-height: 23.5px; font-weight: 700; color: #27598b; }
.details a { color: #27598b; text-decoration: underline; letter-spacing: -.2px; }

.tools { padding: 0 46px 0 47px; height: 196px; }
.tools-row { display: flex; justify-content: space-between; padding-top: 57px; }
.tool-links { display: flex; gap: 17px; color: #555; line-height: 22px; padding-left: 3px; height: 22px; }
.tool { display: flex; align-items: center; }
.tool svg { width: 16px; height: 16px; fill: #555; margin-right: 6px; }
.translate { width: 152px; padding-top: 6px; }
.lang-select { width: 146px; height: 22px; border: 2px solid #999; border-bottom-color: #ddd; border-right-color: #ddd; display: flex; align-items: center; justify-content: space-between; padding-left: 4px; font-family: "Liberation Sans", Arial, sans-serif; font-size: 12.5px; color: #000; background: #fff; }
.lang-arrow { display: flex; align-items: center; justify-content: center; width: 16px; height: 18px; background: #e4e4e4; border: 1px solid #aaa; }
.lang-arrow svg { width: 7px; height: 5px; fill: none; stroke: #555; }
.powered { font-family: "Liberation Sans", Arial, sans-serif; font-size: 11px; line-height: 14px; margin-top: 5px; color: #666; white-space: nowrap; }
.gl { font-weight: 700; }
.tr { font-weight: 700; color: #555; }

.looking { height: 216px; background: #c40000; color: #fff; padding: 27px 46px 0 47px; }
.looking h4 { text-align: center; font-size: 19px; font-weight: 700; line-height: 28px; letter-spacing: -.3px; margin-bottom: 16px; }
.cat-grid { list-style: none; margin: 0; padding: 0; display: grid; grid-template-columns: repeat(3, 370px); column-gap: 30px; grid-auto-rows: 35px; letter-spacing: -.12px; }
.cat-grid li { display: flex; align-items: center; }
.cat-grid svg, .dollar { width: 18px; height: 18px; margin-right: 12px; flex: none; fill: #fff; text-align: center; font-weight: 700; font-size: 18px; line-height: 18px; }
.cat-grid svg.stroke { fill: none; stroke: #fff; stroke-width: 1.5; }

.site-footer { height: 339px; background: #27598b; border-top: 5px solid #0f9fdc; color: #fff; padding: 43px 46px 0 47px; }
.foot-top { display: flex; justify-content: space-between; }
.foot-links { display: flex; letter-spacing: -.1px; }
.foot-links i { font-style: normal; padding: 0 7px; }
.foot-call { display: flex; align-items: center; }
.foot-call svg { width: 14px; height: 14px; fill: #fff; margin-right: 6px; }
.foot-rule { background: #4a74a0; margin-top: 44px; }
.foot-logo { display: flex; margin-top: 45px; gap: 10px; }
.foot-logo svg { width: 55px; height: 89px; }
.foot-name { font-size: 26.5px; line-height: 27px; letter-spacing: -.3px; margin-top: -2px; }
```
